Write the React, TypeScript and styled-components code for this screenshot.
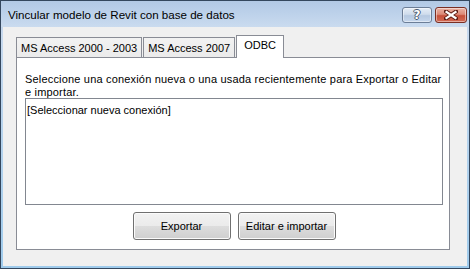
import React from "react";
import styled, { createGlobalStyle } from "styled-components";

const GlobalStyle = createGlobalStyle`
  html, body { margin: 0; padding: 0; background: #ffffff; }
  body { font-family: "Liberation Sans", Arial, sans-serif; }
  * { box-sizing: border-box; }
`;

const Window = styled.div`
  width: 470px;
  height: 269px;
  border: 1px solid #34475e;
  background: linear-gradient(180deg, #b3cbe6 0%, #c7d9ee 12%, #9fcbec 100%);
  display: flex;
  flex-direction: column;
`;

const TitleBar = styled.div`
  height: 26px;
  display: flex;
  align-items: flex-start;
  padding-left: 7px;
  background: linear-gradient(180deg, #b2c9e5 0%, #bcd1ea 45%, #cadbef 100%);
`;

const Title = styled.div`
  font-family: "Liberation Sans", Arial, sans-serif;
  font-size: 11.6px;
  color: #000;
  line-height: 15px;
  margin-top: 6px;
`;

const CaptionButtons = styled.div`
  margin-left: auto;
  margin-top: 6px;
  margin-right: 2px;
  display: flex;
  gap: 3px;
`;

const CaptionButton = styled.div<{ $close?: boolean }>`
  width: ${(p) => (p.$close ? 32 : 30)}px;
  height: 16px;
  border-radius: 3px;
  border: 1px solid ${(p) => (p.$close ? "#7a2f24" : "#6c7e97")};
  background: ${(p) =>
    p.$close
      ? "linear-gradient(180deg, #eab3a5 0%, #dc8a77 45%, #c6503a 55%, #d26b55 100%)"
      : "linear-gradient(180deg, #e6eef7 0%, #cfdcec 45%, #b6c9e1 55%, #c6d7ec 100%)"};
  box-shadow: inset 0 0 0 1px rgba(255, 255, 255, 0.45);
  display: flex;
  align-items: center;
  justify-content: center;
`;

const HelpGlyph = styled.span`
  font-family: "DejaVu Sans", sans-serif;
  font-weight: bold;
  font-size: 12px;
  line-height: 12px;
  color: #ffffff;
  text-shadow: 1px 0 0 #4c5b70, -1px 0 0 #4c5b70, 0 1px 0 #4c5b70, 0 -1px 0 #4c5b70;
`;

const Client = styled.div`
  flex: 1;
  margin: 0 2px 2px 2px;
  background: #f0f0f0;
  padding: 8px 17px 16px 13px;
  display: flex;
  flex-direction: column;
`;

const TabStrip = styled.div`
  display: flex;
  align-items: flex-end;
  gap: 1px;
  height: 22px;
  position: relative;
  z-index: 1;
`;

const Tab = styled.div<{ $active?: boolean }>`
  height: ${(p) => (p.$active ? 23 : 20)}px;
  padding: ${(p) => (p.$active ? "3px 7px 0" : "4px 4px 0")};
  border: 1px solid #898c95;
  border-bottom: none;
  background: ${(p) =>
    p.$active ? "#ffffff" : "linear-gradient(180deg, #f2f2f2 0%, #ebebeb 100%)"};
  margin-bottom: ${(p) => (p.$active ? "-1px" : "0")};
  font-size: 11px;
  line-height: 13px;
  color: #000;
  white-space: nowrap;
`;

const Panel = styled.div`
  flex: 1;
  border: 1px solid #898c95;
  background: #ffffff;
  padding: 15px 6px 9px 8px;
  display: flex;
  flex-direction: column;
`;

const Label = styled.div`
  font-size: 11px;
  line-height: 13px;
  letter-spacing: 0.18px;
  color: #000;
`;

const ListBox = styled.div`
  flex: 1;
  margin-top: -1px;
  border: 1px solid #828790;
  background: #ffffff;
  padding: 5px 1px;
`;

const ListItem = styled.div`
  font-size: 11px;
  line-height: 13px;
  color: #000;
`;

const ButtonRow = styled.div`
  margin-top: 7px;
  display: flex;
  justify-content: center;
  gap: 7px;
`;

const Button = styled.button`
  width: 98px;
  height: 28px;
  border: 1px solid #707070;
  border-radius: 3px;
  background: linear-gradient(180deg, #f2f2f2 0%, #ebebeb 50%, #dddddd 51%, #cfcfcf 100%);
  box-shadow: inset 0 0 0 1px #fbfbfb;
  font-family: "Liberation Sans", Arial, sans-serif;
  font-size: 11px;
  color: #000;
  padding: 0;
`;

const CloseIcon = () => (
  <svg width="14" height="10" viewBox="0 0 14 10">
    <path d="M2 1.5 L12 8.5 M12 1.5 L2 8.5" stroke="#5a1a12" strokeWidth="4" strokeLinecap="square" />
    <path d="M2.5 2 L11.5 8 M11.5 2 L2.5 8" stroke="#ffffff" strokeWidth="2.2" strokeLinecap="square" />
  </svg>
);

export default function App() {
  return (
    <>
      <GlobalStyle />
      <Window>
        <TitleBar>
          <Title>Vincular modelo de Revit con base de datos</Title>
          <CaptionButtons>
            <CaptionButton>
              <HelpGlyph>?</HelpGlyph>
            </CaptionButton>
            <CaptionButton $close>
              <CloseIcon />
            </CaptionButton>
          </CaptionButtons>
        </TitleBar>
        <Client>
          <TabStrip>
            <Tab>MS Access 2000 - 2003</Tab>
            <Tab>MS Access 2007</Tab>
            <Tab $active>ODBC</Tab>
          </TabStrip>
          <Panel>
            <Label>
              Seleccione una conexión nueva o una usada recientemente para Exportar o Editar e importar.
            </Label>
            <ListBox>
              <ListItem>[Seleccionar nueva conexión]</ListItem>
            </ListBox>
            <ButtonRow>
              <Button>Exportar</Button>
              <Button>Editar e importar</Button>
            </ButtonRow>
          </Panel>
        </Client>
      </Window>
    </>
  );
}
